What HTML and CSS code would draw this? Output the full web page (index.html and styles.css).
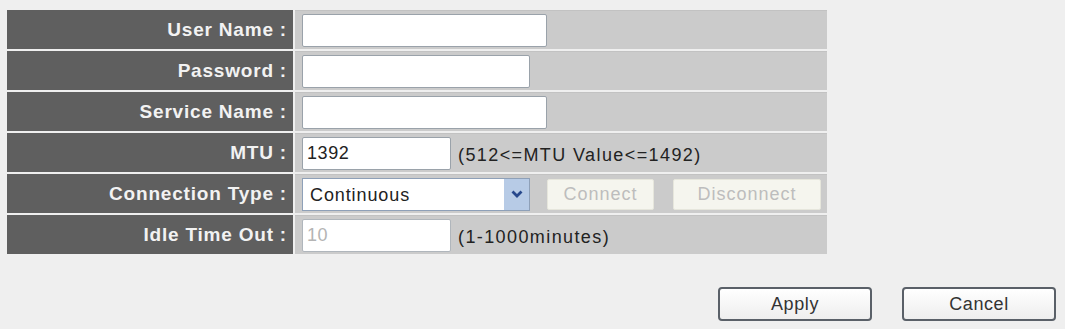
FILE: index.html
```html
<!DOCTYPE html>
<html lang="en">
<head>
  <meta charset="UTF-8" />
  <title>PPPoE Settings</title>
  <link rel="stylesheet" href="styles.css">
</head>
<body>

  <div class="form-grid">
    <div class="label">User Name :</div>
    <div class="value"><input type="text" class="field wide"></div>

    <div class="label">Password :</div>
    <div class="value"><input type="password" class="field mid"></div>

    <div class="label">Service Name :</div>
    <div class="value"><input type="text" class="field wide"></div>

    <div class="label">MTU :</div>
    <div class="value">
      <input type="text" class="field short" value="1392">
      <span class="hint">(512&lt;=MTU Value&lt;=1492)</span>
    </div>

    <div class="label">Connection Type :</div>
    <div class="value">
      <div class="select-box">
        <select>
          <option>Continuous</option>
          <option>Connect on Demand</option>
          <option>Manual</option>
        </select>
        <span class="arrow">
          <svg width="14" height="10" viewBox="0 0 14 10"><path d="M2.5 2.5 L7 7 L11.5 2.5" fill="none" stroke="#27488c" stroke-width="2.8"/></svg>
        </span>
      </div>
      <button class="btn-off connect" disabled>Connect</button>
      <button class="btn-off disconnect" disabled>Disconnect</button>
    </div>

    <div class="label">Idle Time Out :</div>
    <div class="value">
      <input type="text" class="field short" value="10" disabled>
      <span class="hint">(1-1000minutes)</span>
    </div>
  </div>

  <div class="actions">
    <button class="btn">Apply</button>
    <button class="btn">Cancel</button>
  </div>

</body>
</html>
```

FILE: styles.css
```css
body {
  margin: 0;
  padding: 10px 9px 0 7px;
  background: #efefef;
  font-family: 'Liberation Sans', Arial, sans-serif;
  font-size: 18px;
  letter-spacing: 1.1px;
  color: #222;
}

.form-grid {
  display: grid;
  grid-template-columns: 286px 532px;
  grid-auto-rows: 39px;
  gap: 2px;
}

.label {
  background: #5f5f5f;
  color: #f2f2f2;
  font-weight: bold;
  font-size: 19px;
  text-align: right;
  padding-right: 6px;
  display: flex;
  align-items: center;
  justify-content: flex-end;
  letter-spacing: 0.8px;
}

.value {
  background: #cbcbcb;
  border-top: 1px solid #c2c2c2;
  display: flex;
  align-items: center;
  padding-left: 7px;
  gap: 7px;
}

.field {
  box-sizing: border-box;
  height: 33px;
  border: 1px solid #9aa2aa;
  border-radius: 2px;
  background: #fff;
  font-family: inherit;
  font-size: 18px;
  letter-spacing: 0.6px;
  color: #222;
  padding: 0 4px;
  margin: 0;
}

.field.wide { width: 245px; }
.field.mid { width: 228px; }
.field.short { width: 149px; }

.field:disabled {
  background: #fff;
  color: #b4b4b4;
  border-color: #b0b6bc;
}

.hint {
  color: #222;
  padding-top: 4px;
  letter-spacing: 1.4px;
}

.select-box {
  box-sizing: border-box;
  width: 228px;
  height: 33px;
  display: flex;
  border: 1px solid #8ea0b8;
  background: #fff;
}

.select-box select {
  flex: 1;
  border: none;
  outline: none;
  appearance: none;
  -webkit-appearance: none;
  background: transparent;
  font-family: inherit;
  font-size: 18px;
  letter-spacing: 0.9px;
  color: #222;
  padding: 2px 0 0 7px;
  margin: 0;
}

.arrow {
  width: 25px;
  background: #b7cbe6;
  display: flex;
  align-items: center;
  justify-content: center;
}

.btn-off {
  box-sizing: border-box;
  height: 31px;
  border: 1px solid #e6e6dc;
  border-radius: 2px;
  background: #f5f5ee;
  color: #bdbdbd;
  font-family: inherit;
  font-size: 18px;
  letter-spacing: 1px;
  padding: 0;
}

.connect { width: 107px; margin-left: 10px; }
.disconnect { width: 148px; margin-left: 12px; }

.actions {
  display: flex;
  justify-content: flex-end;
  gap: 30px;
  margin-top: 33px;
}

.btn {
  box-sizing: border-box;
  width: 154px;
  height: 34px;
  border: 2px solid #5a6068;
  border-radius: 4px;
  background: linear-gradient(to bottom, #ffffff, #eeeeee);
  font-family: inherit;
  font-size: 18px;
  letter-spacing: 0.6px;
  color: #333;
  cursor: pointer;
}

.btn:hover {
  background: linear-gradient(to bottom, #ffffff, #e2e2e2);
}
```
